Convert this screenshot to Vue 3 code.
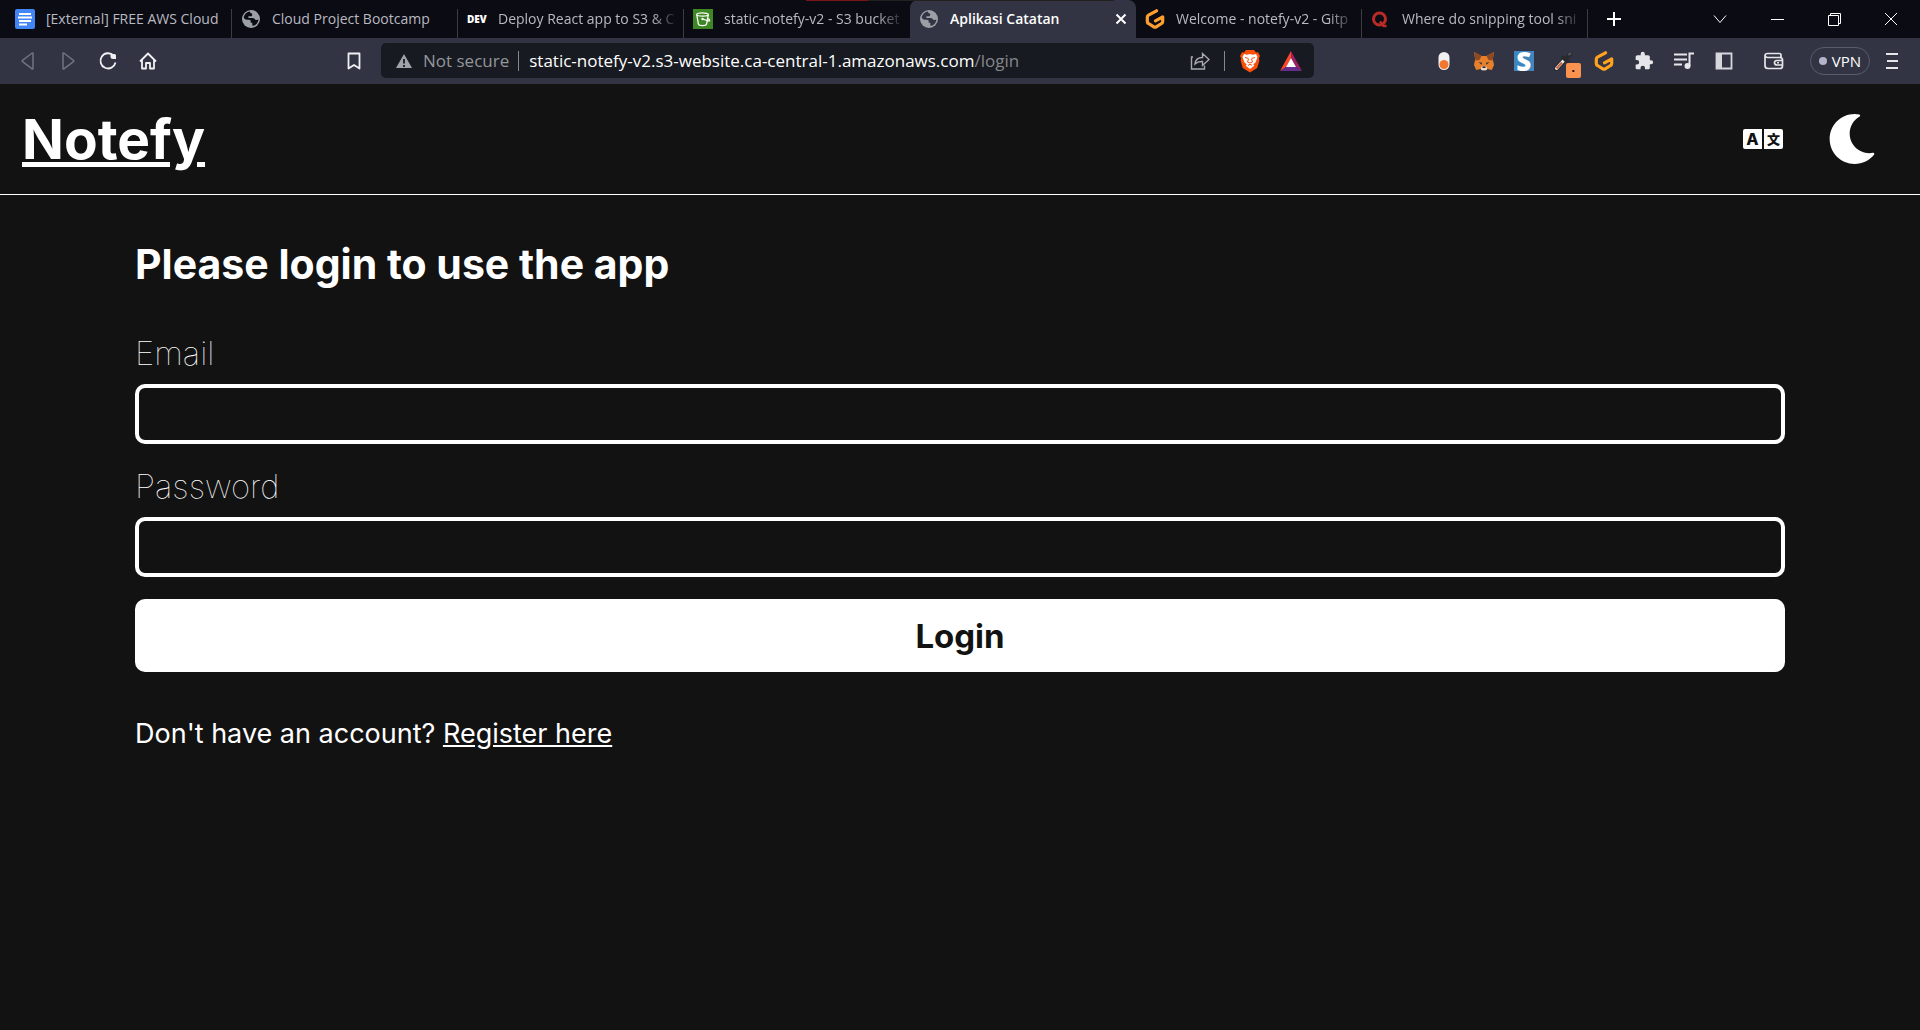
<script setup>
import { ref } from 'vue'

const email = ref('')
const password = ref('')

const tabs = [
  { icon: 'docs', title: '[External] FREE AWS Cloud', divider: true },
  { icon: 'globe', title: 'Cloud Project Bootcamp', divider: true },
  { icon: 'dev', title: 'Deploy React app to S3 & C', divider: true, faded: true },
  { icon: 'bucket', title: 'static-notefy-v2 - S3 bucket', faded: true },
  { icon: 'globe', title: 'Aplikasi Catatan', active: true },
  { icon: 'gitpod', title: 'Welcome - notefy-v2 - Gitp', divider: true, faded: true },
  { icon: 'quora', title: 'Where do snipping tool sni', divider: true, faded: true }
]
</script>

<template>
  <div class="window">
    <header class="tab-bar">
      <nav class="tabs" aria-label="Tabs">
        <button
          v-for="tab in tabs"
          :key="tab.title"
          type="button"
          class="tab"
          :class="{ active: tab.active, divider: tab.divider }"
        >
          <svg v-if="tab.icon === 'docs'" class="favicon" viewBox="0 0 20 20">
            <rect width="20" height="20" rx="2" fill="#4285f4" />
            <path d="M4 5h12M3 8.500h14M4 12h12M4 15.500h8" stroke="#fff" stroke-width="2" />
          </svg>
          <svg v-else-if="tab.icon === 'globe'" class="favicon" viewBox="0 0 20 20">
            <circle cx="10" cy="10" r="9" fill="#9aa0a6" />
            <path
              d="M9 2.500c-3 .4-5.500 2.500-6.300 5.500.3 2 1.600 2.700 3.300 2.700h2.200c1 0 1.500.8 1.500 1.700v1.300h1.600v2.900c1 .3 1.900.1 2.900-.5 1.800-1.200 3-3.200 3.200-5.500-1 .6-2.500.8-3.300-.2-.9-1.200-2.200-1.300-3.600-1.300H7.400V7.300h2.300c.9 0 1.500-.5 1.500-1.500V4.600c-1.200 0-2.400-.6-2.200-2.100z"
              :fill="tab.active ? '#323443' : '#0b0b14'"
            />
          </svg>
          <span v-else-if="tab.icon === 'dev'" class="favicon dev">DEV</span>
          <svg v-else-if="tab.icon === 'bucket'" class="favicon" viewBox="0 0 20 20">
            <rect width="20" height="20" fill="#3f8624" />
            <g fill="none" stroke="#fff" stroke-width="1.300">
              <ellipse cx="9.500" cy="5.500" rx="5.800" ry="1.600" />
              <path d="M3.700 5.500l1.700 9.700c.4 1.800 7.800 1.800 8.200 0l1.700-9.700M9.500 10l6.500 2c1.200-.3.600-1.600-1-2.400" />
            </g>
            <circle cx="9.500" cy="10" r="1.200" fill="#fff" />
          </svg>
          <svg v-else-if="tab.icon === 'gitpod'" class="favicon" viewBox="0 0 20 20">
            <path
              d="M11.500 1.800L3.500 6.200q-1.200.7-1.200 2v4.300q0 1.400 1.200 2l5.300 3.300q1.200.7 2.400 0l5.300-3.300q1.200-.7 1.200-2V7.800L10.500 11.800"
              fill="none"
              stroke="#ffa02e"
              stroke-width="3.200"
              stroke-linecap="round"
              stroke-linejoin="round"
            />
          </svg>
          <svg v-else class="favicon" viewBox="0 0 20 20">
            <circle cx="8.500" cy="10" r="6" fill="none" stroke="#b92b27" stroke-width="3" />
            <path d="M9 12.500l3.500 4.500h3" fill="none" stroke="#b92b27" stroke-width="2.500" />
          </svg>
          <span class="tab-title" :class="{ faded: tab.faded }">{{ tab.title }}</span>
          <svg v-if="tab.active" class="tab-close" viewBox="0 0 12 12">
            <path d="M1.500 1.500l9 9M10.500 1.500l-9 9" stroke="#fff" stroke-width="2" />
          </svg>
        </button>
        <button type="button" class="new-tab" aria-label="New tab">
          <svg width="14" height="14" viewBox="0 0 14 14">
            <path d="M7 0v14M0 7h14" stroke="#fff" stroke-width="2" />
          </svg>
        </button>
      </nav>
      <div class="window-controls">
        <button type="button" aria-label="Search tabs">
          <svg viewBox="0 0 14 14"><path d="M1 3.500l6 7 6-7" /></svg>
        </button>
        <button type="button" aria-label="Minimize">
          <svg viewBox="0 0 14 14"><path d="M1 7.500h13" /></svg>
        </button>
        <button type="button" aria-label="Restore">
          <svg viewBox="0 0 14 14"><path d="M1.500 3.500h10v10h-10zM3.500 3.500v-2h10v10h-2" /></svg>
        </button>
        <button type="button" aria-label="Close">
          <svg viewBox="0 0 14 14"><path d="M1 1l12 12M13 1L1 13" /></svg>
        </button>
      </div>
    </header>

    <div class="toolbar">
      <div class="navigation">
        <button type="button" aria-label="Back">
          <svg viewBox="0 0 20 20" class="dim"><path d="M15 2.500v15q0 .8-.8.400L4.500 10.600q-.6-.6 0-1.200L14.200 2q.8-.3.800.5z" /></svg>
        </button>
        <button type="button" aria-label="Forward">
          <svg viewBox="0 0 20 20" class="dim"><path d="M5 2.500v15q0 .8.800.4l9.700-7.300q.6-.6 0-1.200L5.800 2q-.8-.3-.8.500z" /></svg>
        </button>
        <button type="button" aria-label="Reload">
          <svg viewBox="0 0 20 20">
            <path d="M15.500 4.500a7.600 7.600 0 1 0 2 7" stroke-width="1.800" />
            <path d="M12.500 3h4q1.500 0 1.500 1.500V8h-3q-2.500 0-2.500-2.500z" fill="#f0f0f3" stroke="none" />
          </svg>
        </button>
        <button type="button" aria-label="Home">
          <svg viewBox="0 0 20 20"><path d="M2 10.500L10 2.500l8 8M4 9v8.500h4V12h4v5.500h4V9" stroke-width="1.800" /></svg>
        </button>
        <button type="button" class="bookmark" aria-label="Bookmark">
          <svg viewBox="0 0 20 20"><path d="M4.500 2.500h11v15l-5.500-3.600-5.500 3.600z" stroke-width="1.800" /></svg>
        </button>
      </div>

      <div class="address">
        <svg class="warning" viewBox="0 0 16 16">
          <path d="M8 1l8 14H0z" fill="#a0a3a9" />
          <path d="M8 6v4.500M8 12v2" stroke="#171a20" stroke-width="1.800" />
        </svg>
        <span class="security">Not secure</span>
        <span class="rule"></span>
        <span class="url">static-notefy-v2.s3-website.ca-central-1.amazonaws.com<span class="path">/login</span></span>
        <span class="address-actions">
          <svg width="20" height="20" viewBox="0 0 20 20">
            <path d="M3 6H1.500v12h13v-3.500M5 13c.4-4.200 2.700-6.500 7.500-6.500V2.500l6.500 6-6.500 6v-4C9 10.300 7 11 5 13z" fill="none" stroke="#a8aaaf" stroke-width="1.400" />
          </svg>
          <span class="rule"></span>
          <svg width="20" height="24" viewBox="0 0 20 24">
            <path d="M6 1h8l2 2.500 2-.3L20 7l-1 2 .3 3-2.100 7L10 23.500 2.800 19 .7 12 1 9 0 7l2-3.800 2 .3z" fill="#fb4f0a" />
            <path d="M4 5l3 .8 3-.7 3 .7 3-.8 1.500 3-2 5.500-2.200 1.800 1 1.400L10 20l-4.300-3.300 1-1.400-2.200-1.800L2.500 8z" fill="#fff" />
            <path d="M5 8.500l3.500.9M15 8.500l-3.500.9M8.500 10l-1 3 2.500 1 2.500-1-1-3M7.800 16.500L10 15.300l2.200 1.200" fill="none" stroke="#fb4f0a" stroke-width="1" />
          </svg>
          <svg width="22" height="20" viewBox="0 0 22 20">
            <path d="M11 0v7l-5 9L0 20z" fill="#ff4724" />
            <path d="M11 0l11 20-6-4-5-9z" fill="#9e1f63" />
            <path d="M0 20l6-4h10l6 4z" fill="#662d91" />
            <path d="M11 7l5 9H6z" fill="#fff" />
          </svg>
        </span>
      </div>

      <div class="extensions">
        <svg viewBox="0 0 20 20">
          <rect x="4.500" y="1" width="11" height="18" rx="5.500" fill="#f1f1f1" />
          <circle cx="10" cy="13.500" r="4.500" fill="#f4772e" />
        </svg>
        <svg viewBox="0 0 20 20">
          <path d="M0 1l7.500 4h5L20 1l-1.200 7 1.200 6-2.200 5-4.300-1-1.500 1.200H8L6.500 18l-4.300 1L0 14l1.200-6z" fill="#e8802b" />
          <path d="M0 1l7.500 4L5.500 9l-4 .5zM20 1l-7.500 4 2 4 4 .5z" fill="#8d4a22" />
          <path d="M4.500 11l3.500.8-.5 2zM15.500 11l-3.500.8.5 2z" fill="#233447" />
          <path d="M7.500 15.500h5l.5 3-1 .7H8l-1-.7z" fill="#e8dfd6" />
          <path d="M8.500 15.500h3v1.500h-3z" fill="#20242b" />
        </svg>
        <span class="s-badge">S</span>
        <span class="picker">
          <svg viewBox="0 0 20 20">
            <path d="M2 18L11 8" stroke="#292a2e" stroke-width="5" stroke-linecap="round" />
            <path d="M2.500 17.500L11 8" stroke="#f1efed" stroke-width="3" stroke-linecap="round" />
            <path d="M2.500 17.500L8 11.500" stroke="#c9683f" stroke-width="2" />
            <path d="M9 6.500l4.500 4M12 8l4.500-5" stroke="#292a2e" stroke-width="4" stroke-linecap="round" />
            <path d="M15 3.500l1.500-1" stroke="#5a5b60" stroke-width="2" stroke-linecap="round" />
          </svg>
          <span class="count">.</span>
        </span>
        <svg viewBox="0 0 20 20">
          <path
            d="M11.500 1.800L3.500 6.200q-1.200.7-1.200 2v4.300q0 1.400 1.200 2l5.300 3.300q1.200.7 2.400 0l5.300-3.300q1.200-.7 1.200-2V7.800L10.500 11.800"
            fill="none"
            stroke="#ffa31f"
            stroke-width="3.200"
            stroke-linecap="round"
            stroke-linejoin="round"
          />
        </svg>
        <svg viewBox="0 0 24 24">
          <path d="M20.500 11H19V7c0-1.100-.9-2-2-2h-4V3.500a2.500 2.500 0 0 0-5 0V5H4c-1.100 0-2 .9-2 2v3.800h1.500a2.700 2.700 0 0 1 0 5.400H2V20c0 1.100.9 2 2 2h3.800v-1.500a2.700 2.700 0 0 1 5.400 0V22H17c1.100 0 2-.9 2-2v-4h1.500a2.500 2.500 0 0 0 0-5z" fill="#e6e6ea" />
        </svg>
        <svg viewBox="0 0 20 20">
          <path d="M0 3.500h13M0 8.500h13M0 13.500h8M15.500 15V2.500H20" fill="none" stroke="#e6e6ea" stroke-width="2" />
          <circle cx="13.500" cy="15" r="3" fill="#e6e6ea" />
        </svg>
        <svg viewBox="0 0 20 20">
          <path d="M2.500 2.500h15v15h-15z" fill="none" stroke="#d6d7dc" stroke-width="1.800" />
          <path d="M2 2h6v16H2z" fill="#d6d7dc" />
        </svg>
        <svg class="wallet" viewBox="0 0 20 20">
          <path d="M17 6.500V4q0-1.500-1.500-1.500h-12Q1 2.500 1 4.800v9.700q0 3 3 3h12q2.500 0 2.500-2.500V9q0-2.500-2.500-2.500H3.500Q1.500 6.500 1 4.500M18.500 9.500H13q-2.500 0-2.500 2.200T13 14h5.500" fill="none" stroke="#e6e6ea" stroke-width="1.700" />
          <circle cx="14" cy="11.800" r="1" fill="#e6e6ea" />
        </svg>
        <button type="button" class="vpn"><span class="dot"></span>VPN</button>
        <button type="button" class="menu" aria-label="Menu">
          <svg width="12" height="18" viewBox="0 0 12 18">
            <path d="M0 2h12M1 9h11M0 16h12" stroke="#e6e6ea" stroke-width="2" />
          </svg>
        </button>
      </div>
    </div>

    <div class="page">
      <header class="site-header">
        <h1><a href="/">Notefy</a></h1>
        <div class="site-actions">
          <button type="button" class="language" aria-label="Change language">
            <span>A</span><span>文</span>
          </button>
          <button type="button" class="theme" aria-label="Change theme">
            <svg width="50" height="50" viewBox="0 0 512 512">
              <path
                fill="#fff"
                d="M283.211 512c78.962 0 151.079-35.925 198.857-94.792 7.068-8.708-.639-21.430-11.562-19.350-124.203 23.654-238.262-71.576-238.262-196.954 0-72.222 38.662-138.635 101.498-174.394 9.686-5.512 7.250-20.197-3.756-22.230A258.156 258.156 0 0 0 283.211 0c-141.309 0-256 114.511-256 256 0 141.309 114.511 256 256 256z"
              />
            </svg>
          </button>
        </div>
      </header>

      <main>
        <h2>Please login to use the app</h2>
        <form @submit.prevent>
          <label for="email">Email</label>
          <input id="email" v-model="email" type="email" />
          <label for="password">Password</label>
          <input id="password" v-model="password" type="password" />
          <button type="submit" class="login">Login</button>
        </form>
        <p>Don't have an account? <a href="/register">Register here</a></p>
      </main>
    </div>
  </div>
</template>

<style>
body {
  margin: 0;
  background: #121212;
}
</style>

<style scoped>
* {
  box-sizing: border-box;
}

button {
  padding: 0;
  border: 0;
  background: none;
  color: inherit;
  font: inherit;
}

svg {
  display: block;
}

.window {
  display: flex;
  flex-direction: column;
  min-height: 100vh;
  color: #fff;
  font-family: "Open Sans", "Noto Sans", sans-serif;
}

.tab-bar {
  position: relative;
  display: flex;
  justify-content: space-between;
  height: 38px;
  background: #0b0b14;
}

.tab-bar::after {
  position: absolute;
  top: 0;
  left: 42%;
  width: 16%;
  height: 1px;
  background: linear-gradient(to right, #7a1418 20%, #23211f 20%);
  content: "";
}

.tabs {
  display: flex;
  flex: 1;
  min-width: 0;
  padding-left: 6px;
}

.tab {
  position: relative;
  display: flex;
  flex: 0 1 226px;
  align-items: center;
  gap: 11px;
  min-width: 0;
  padding: 0 9px;
  color: #b9bac0;
  font-size: 14px;
  line-height: 20px;
  text-align: left;
}

.tab.divider::after {
  position: absolute;
  right: 0;
  bottom: 0;
  width: 1px;
  height: 29px;
  background: #3c3c41;
  content: "";
}

.tab.active {
  border-radius: 8px 8px 0 0;
  background: #323443;
  color: #fff;
  font-weight: 600;
}

.favicon {
  flex: none;
  width: 20px;
  height: 20px;
}

.dev {
  font-size: 10px;
  font-weight: 800;
  color: #fff;
}

.tab-title {
  flex: 1;
  margin-right: -4px;
  white-space: nowrap;
}

.faded {
  mask-image: linear-gradient(to right, #000 calc(100% - 28px), transparent);
}

.tab-close {
  flex: none;
  width: 12px;
  height: 12px;
}

.new-tab {
  flex: none;
  width: 54px;
  padding-left: 19px;
}

.window-controls {
  display: flex;
  padding-right: 1px;
}

.window-controls button {
  display: grid;
  place-items: center;
  width: 57px;
}

.window-controls svg {
  width: 14px;
  height: 14px;
  fill: none;
  stroke: #fff;
}

.toolbar {
  display: grid;
  grid-template-columns: 381fr 933fr 606fr;
  align-items: center;
  height: 46px;
  padding-bottom: 1px;
  background: #323443;
}

.navigation {
  display: flex;
  gap: 20px;
  padding: 0 17px 0 18px;
}

.navigation svg {
  width: 20px;
  height: 20px;
  fill: none;
  stroke: #f0f0f3;
  stroke-width: 1.500;
  stroke-linejoin: round;
}

.navigation .dim {
  stroke: #71737e;
}

.bookmark {
  margin-left: auto;
}

.address {
  display: flex;
  align-items: center;
  height: 35px;
  padding: 0 12px 0 15px;
  border-radius: 5px;
  background: #171a20;
  font-size: 17px;
  line-height: 24px;
  white-space: nowrap;
}

.warning {
  width: 16px;
  height: 16px;
  margin-right: 11px;
}

.security {
  color: #94969b;
}

.rule {
  width: 1px;
  height: 20px;
  background: #85878c;
}

.address > .rule {
  margin: 0 10px 0 9px;
}

.path {
  color: #85878c;
}

.address-actions {
  display: flex;
  align-items: center;
  margin-left: auto;
}

.address-actions .rule {
  margin: 0 15px 0 14px;
}

.address-actions svg + svg {
  margin-left: 20px;
}

.extensions {
  display: flex;
  align-items: center;
  justify-content: flex-end;
  gap: 20px;
  padding-right: 22px;
}

.extensions > svg,
.picker svg {
  width: 20px;
  height: 20px;
}

.extensions > .wallet {
  margin-left: 10px;
}

.s-badge {
  width: 20px;
  height: 20px;
  background: #3f86c0;
  font-size: 26px;
  font-weight: 800;
  line-height: 20px;
  text-align: center;
}

.picker {
  position: relative;
}

.count {
  position: absolute;
  top: 12px;
  left: 12px;
  width: 15px;
  height: 15px;
  border-radius: 2px;
  background: #fb9350;
  color: #000;
  font-size: 12px;
  font-weight: 700;
  line-height: 10px;
  text-align: center;
}

.vpn {
  display: flex;
  align-items: center;
  gap: 5px;
  height: 28px;
  margin: 0 -4px 0 6px;
  padding: 0 8px;
  border: 1px solid #5a5c6d;
  border-radius: 14px;
  font-size: 15px;
  line-height: 20px;
}

.dot {
  width: 8px;
  height: 8px;
  border-radius: 50%;
  background: #b3b4c9;
}

.page {
  flex: 1;
  background: #121212;
  font-family: Inter, sans-serif;
}

.site-header {
  display: flex;
  align-items: center;
  justify-content: space-between;
  height: 111px;
  padding: 0 43px 0 22px;
  border-bottom: 1px solid #fff;
}

h1 {
  margin: 0;
  font-size: 55px;
  font-weight: 700;
  line-height: 68px;
}

a {
  color: inherit;
}

.site-actions {
  display: flex;
  align-items: center;
  gap: 44px;
}

.language {
  display: flex;
  gap: 2px;
}

.language span {
  width: 19px;
  height: 20px;
  border-radius: 2px 0 0 2px;
  background: #fff;
  color: #121212;
  font-family: Inter, "Noto Sans CJK SC", sans-serif;
  font-size: 16px;
  font-weight: 800;
  line-height: 20px;
  text-align: center;
}

.language span + span {
  border-radius: 0 2px 2px 0;
  font-size: 13px;
}

main {
  padding: 43px 135px;
}

h2 {
  margin: 0 0 43px;
  font-size: 41px;
  font-weight: 700;
  line-height: 52px;
}

form {
  display: flex;
  flex-direction: column;
}

label {
  margin-bottom: 11px;
  font-size: 33px;
  font-weight: 100;
  line-height: 40px;
}

input {
  width: 100%;
  height: 60px;
  margin-bottom: 22px;
  padding: 0 12px;
  border: 4px solid #fff;
  border-radius: 10px;
  outline: 0;
  background: transparent;
  color: #fff;
  font: inherit;
  font-size: 33px;
}

.login {
  height: 73px;
  border-radius: 10px;
  background: #fff;
  color: #121212;
  font-size: 33px;
  font-weight: 700;
}

p {
  margin: 45px 0 0;
  font-size: 27px;
  line-height: 34px;
}
</style>
